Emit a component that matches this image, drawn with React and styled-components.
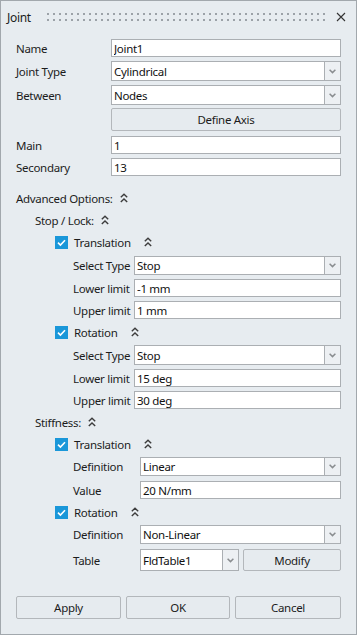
import React from 'react';
import styled, { createGlobalStyle } from 'styled-components';

const Global = createGlobalStyle`
  html, body { margin: 0; padding: 0; background: #ffffff; }
  body {
    font-family: "Noto Sans", "Open Sans", sans-serif;
    font-size: 11.5px;
    letter-spacing: -0.3px;
    color: #1c1c1c;
  }
  * { box-sizing: border-box; }
`;

const Window = styled.div`
  width: 357px;
  height: 635px;
  background: #e7ecf0;
  border: 1px solid #a2a8ad;
  display: flex;
  flex-direction: column;
`;

const TitleBar = styled.div`
  height: 32px;
  display: flex;
  align-items: center;
  padding: 0 10px 0 6px;
`;

const Title = styled.span`
  font-size: 12px;
  color: #1c1c1c;
`;

const Grip = styled.div`
  flex: 1;
  height: 12px;
  margin: 0 10px 0 14px;
  background-image: radial-gradient(circle, #9ca2a8 0.9px, transparent 1.2px);
  background-size: 6px 6px;
  background-position: 0 0;
`;

const Close = styled.button`
  border: 0;
  background: transparent;
  padding: 0;
  width: 10px;
  height: 10px;
  display: flex;
  align-items: center;
  justify-content: center;
`;

const Body = styled.div`
  flex: 1;
  display: flex;
  flex-direction: column;
  padding: 0 15px 15px 15px;
`;

const Row = styled.div`
  display: grid;
  grid-template-columns: ${p => p.$labelW}px 1fr;
  align-items: center;
  height: ${p => p.$h}px;
  margin-top: ${p => p.$mt}px;
  margin-left: ${p => p.$indent || 0}px;
`;

const Label = styled.span`
  white-space: nowrap;
`;

const Input = styled.input`
  height: 100%;
  width: 100%;
  border: 1px solid #abafb3;
  background: #ffffff;
  font: inherit;
  letter-spacing: inherit;
  color: #111;
  padding: 0 0 0 2px;
  outline: none;
`;

const SelectBox = styled.div`
  display: flex;
  height: 100%;
  flex: ${p => (p.$w ? 'none' : '1')};
  width: ${p => (p.$w ? `${p.$w}px` : '100%')};
`;

const SelectValue = styled.div`
  flex: 1;
  background: #ffffff;
  border: 1px solid #abafb3;
  display: flex;
  align-items: center;
  padding-left: 2px;
  color: #111;
`;

const ArrowBox = styled.div`
  width: 16px;
  border: 1px solid #abafb3;
  border-left: 0;
  background: #edf0f3;
  display: flex;
  align-items: center;
  justify-content: center;
`;

const Button = styled.button`
  height: 100%;
  width: 100%;
  flex: 1;
  border: 1px solid #b3b7bb;
  border-radius: 2px;
  background: #e6ebef;
  font: inherit;
  letter-spacing: inherit;
  color: #1c1c1c;
  padding: 0;
`;

const Split = styled.div`
  display: flex;
  gap: 4px;
  height: 100%;
`;

const Header = styled.div`
  display: flex;
  align-items: center;
  height: ${p => p.$h || 20}px;
  margin-top: ${p => p.$mt}px;
  margin-left: ${p => p.$indent}px;
  gap: ${p => p.$gap}px;
`;

const CheckWrap = styled.span`
  display: flex;
  align-items: center;
`;

const CheckLabel = styled.span`
  margin-left: 6px;
`;

const Check = styled.span`
  width: 13px;
  height: 13px;
  background: #1a97d9;
  display: inline-flex;
  align-items: center;
  justify-content: center;
`;

const Footer = styled.div`
  margin-top: auto;
  display: grid;
  grid-template-columns: 105px 104px 1fr;
  gap: 5px;
  height: 23px;
`;

const Chevrons = () => (
  <svg width="8" height="10" viewBox="0 0 8 10">
    <polyline points="0.8,4.3 4,1.2 7.2,4.3" fill="none" stroke="#3d3d3d" strokeWidth="1.4" />
    <polyline points="0.8,9 4,5.9 7.2,9" fill="none" stroke="#3d3d3d" strokeWidth="1.4" />
  </svg>
);

const Arrow = () => (
  <svg width="7" height="5" viewBox="0 0 7 5">
    <polyline points="0.6,0.8 3.5,3.6 6.4,0.8" fill="none" stroke="#8a8d90" strokeWidth="1.5" />
  </svg>
);

const CheckMark = () => (
  <svg width="13" height="13" viewBox="0 0 13 13">
    <polyline points="3,6.6 5.4,9 10,4.2" fill="none" stroke="#ffffff" strokeWidth="1.6" />
  </svg>
);

const Select = ({ value, w }) => (
  <SelectBox $w={w}>
    <SelectValue>{value}</SelectValue>
    <ArrowBox><Arrow /></ArrowBox>
  </SelectBox>
);

const Section = ({ text, indent, mt }) => (
  <Header $indent={indent} $mt={mt} $gap={7}>
    <span>{text}</span>
    <Chevrons />
  </Header>
);

const CheckSection = ({ text, mt }) => (
  <Header $indent={39} $mt={mt} $gap={13}>
    <CheckWrap>
      <Check><CheckMark /></Check>
      <CheckLabel>{text}</CheckLabel>
    </CheckWrap>
    <Chevrons />
  </Header>
);

const FieldRow = ({ label, children, mt, h, indent = 0, labelW = 95 }) => (
  <Row $mt={mt} $h={h} $indent={indent} $labelW={labelW}>
    <Label>{label}</Label>
    {children}
  </Row>
);

export default function App() {
  return (
    <>
      <Global />
      <Window>
        <TitleBar>
          <Title>Joint</Title>
          <Grip />
          <Close aria-label="close">
            <svg width="10" height="10" viewBox="0 0 10 10">
              <path d="M1 1 L9 9 M9 1 L1 9" stroke="#333" strokeWidth="1.1" fill="none" />
            </svg>
          </Close>
        </TitleBar>
        <Body>
          <FieldRow label="Name" mt={6} h={18}><Input readOnly value="Joint1" /></FieldRow>
          <FieldRow label="Joint Type" mt={4} h={20}><Select value="Cylindrical" /></FieldRow>
          <FieldRow label="Between" mt={4} h={20}><Select value="Nodes" /></FieldRow>
          <FieldRow label="" mt={3} h={23}><Button>Define Axis</Button></FieldRow>
          <FieldRow label="Main" mt={5} h={18}><Input readOnly value="1" /></FieldRow>
          <FieldRow label="Secondary" mt={4} h={18}><Input readOnly value="13" /></FieldRow>

          <Section text="Advanced Options:" indent={0} mt={12} />
          <Section text="Stop / Lock:" indent={19} mt={2} />

          <CheckSection text="Translation" mt={2} />
          <FieldRow label="Select Type" mt={4} h={19} indent={57} labelW={61}><Select value="Stop" /></FieldRow>
          <FieldRow label="Lower limit" mt={4} h={18} indent={57} labelW={61}><Input readOnly value="-1 mm" /></FieldRow>
          <FieldRow label="Upper limit" mt={4} h={18} indent={57} labelW={61}><Input readOnly value="1 mm" /></FieldRow>

          <CheckSection text="Rotation" mt={3} />
          <FieldRow label="Select Type" mt={3} h={20} indent={57} labelW={61}><Select value="Stop" /></FieldRow>
          <FieldRow label="Lower limit" mt={4} h={18} indent={57} labelW={61}><Input readOnly value="15 deg" /></FieldRow>
          <FieldRow label="Upper limit" mt={4} h={18} indent={57} labelW={61}><Input readOnly value="30 deg" /></FieldRow>

          <Section text="Stiffness:" indent={19} mt={3} />
          <CheckSection text="Translation" mt={2} />
          <FieldRow label="Definition" mt={3} h={19} indent={57} labelW={67}><Select value="Linear" /></FieldRow>
          <FieldRow label="Value" mt={5} h={18} indent={57} labelW={67}><Input readOnly value="20 N/mm" /></FieldRow>

          <CheckSection text="Rotation" mt={3} />
          <FieldRow label="Definition" mt={3} h={19} indent={57} labelW={67}><Select value="Non-Linear" /></FieldRow>
          <FieldRow label="Table" mt={5} h={22} indent={57} labelW={67}>
            <Split>
              <Select value="FldTable1" w={99} />
              <Button>Modify</Button>
            </Split>
          </FieldRow>

          <Footer>
            <Button>Apply</Button>
            <Button>OK</Button>
            <Button>Cancel</Button>
          </Footer>
        </Body>
      </Window>
    </>
  );
}
